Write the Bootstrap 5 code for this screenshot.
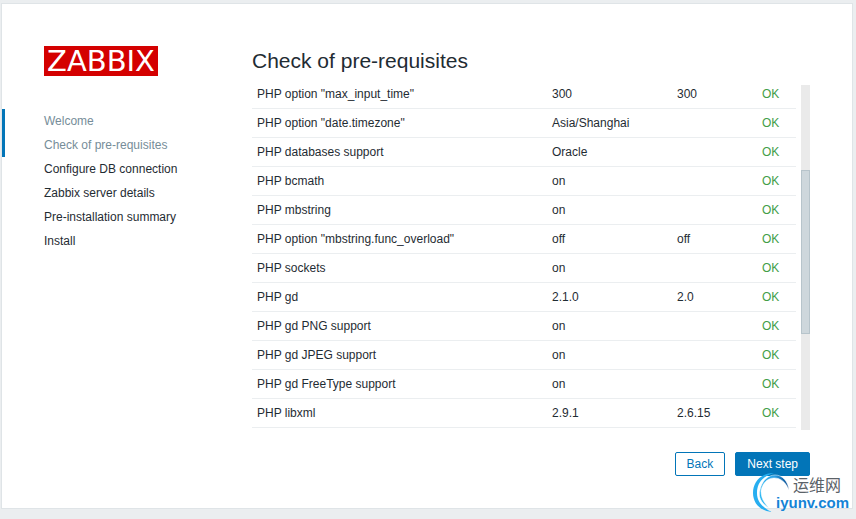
<!DOCTYPE html>
<html lang="en">
<head>
<meta charset="utf-8">
<meta name="viewport" content="width=device-width, initial-scale=1">
<title>Installation - Check of pre-requisites</title>
<link href="https://cdn.jsdelivr.net/npm/bootstrap@5.3.0/dist/css/bootstrap.min.css" rel="stylesheet">
<style>
body { background: #ebeef0; color: #1f2c33; font: 12px/16px "Liberation Sans", Arial, sans-serif; }
.setup-panel { margin: 3px 3px 10px 1px; border: 1px solid #dfe4e7; padding: 42px 42px 32px 0; }
.setup-side { width: 250px; }
.setup-logo { width: 114px; margin: 0 0 33px 42px; background: #d40000; color: #fff; font: 29px/30px "DejaVu Sans", sans-serif; }
.step { height: 24px; padding: 4px 0 4px 39px; border-left: 3px solid transparent; }
.step-done { border-left-color: #0275b8; color: #768d99; }
.setup-title { font-size: 21px; line-height: 24px; margin: 3px 0 12px; color: #1f2c33; font-weight: 400; }
.req-area { height: 345px; gap: 5px; }
.req-table { table-layout: fixed; border-collapse: separate; border-spacing: 0; }
.req-table td { height: 29px; padding: 6px 5px; line-height: 16px; border-bottom: 1px solid #ebeef0; white-space: nowrap; }
.req-table tr:first-child td { height: 24px; padding-top: 1px; }
.col-current { width: 125px; }
.col-required { width: 85px; }
.col-status { width: 39px; }
.status-ok { color: #429e47; }
.track { width: 9px; padding-top: 85px; background: #eaeaea; }
.thumb { height: 164px; background: #ced7dc; border: 1px solid #b7c4cb; }
.setup-actions { margin-top: 22px; gap: 10px; }
.btn-setup { --bs-btn-font-size: 12px; --bs-btn-line-height: 16px; --bs-btn-padding-x: 11px; --bs-btn-padding-y: 3px; --bs-btn-border-radius: 2px; --bs-btn-color: #0275b8; --bs-btn-border-color: #0275b8; --bs-btn-bg: #fff; }
.btn-next { --bs-btn-color: #fff; --bs-btn-bg: #0275b8; }
.site-mark { right: 0; bottom: -5px; width: 100px; height: 42px; }
</style>
</head>
<body>
<div class="setup-panel bg-white d-flex position-relative">
  <aside class="setup-side flex-shrink-0">
    <div class="setup-logo text-center text-nowrap">ZABBIX</div>
    <ul class="list-unstyled mb-0">
      <li class="step step-done">Welcome</li>
      <li class="step step-done">Check of pre-requisites</li>
      <li class="step">Configure DB connection</li>
      <li class="step">Zabbix server details</li>
      <li class="step">Pre-installation summary</li>
      <li class="step">Install</li>
    </ul>
  </aside>
  <main class="flex-grow-1">
    <h1 class="setup-title">Check of pre-requisites</h1>
    <div class="req-area d-flex">
      <div class="flex-grow-1">
        <table class="req-table w-100">
          <colgroup><col><col class="col-current"><col class="col-required"><col class="col-status"></colgroup>
          <tbody>
            <tr><td>PHP option "max_input_time"</td><td>300</td><td>300</td><td class="status-ok">OK</td></tr>
            <tr><td>PHP option "date.timezone"</td><td>Asia/Shanghai</td><td></td><td class="status-ok">OK</td></tr>
            <tr><td>PHP databases support</td><td>Oracle</td><td></td><td class="status-ok">OK</td></tr>
            <tr><td>PHP bcmath</td><td>on</td><td></td><td class="status-ok">OK</td></tr>
            <tr><td>PHP mbstring</td><td>on</td><td></td><td class="status-ok">OK</td></tr>
            <tr><td>PHP option "mbstring.func_overload"</td><td>off</td><td>off</td><td class="status-ok">OK</td></tr>
            <tr><td>PHP sockets</td><td>on</td><td></td><td class="status-ok">OK</td></tr>
            <tr><td>PHP gd</td><td>2.1.0</td><td>2.0</td><td class="status-ok">OK</td></tr>
            <tr><td>PHP gd PNG support</td><td>on</td><td></td><td class="status-ok">OK</td></tr>
            <tr><td>PHP gd JPEG support</td><td>on</td><td></td><td class="status-ok">OK</td></tr>
            <tr><td>PHP gd FreeType support</td><td>on</td><td></td><td class="status-ok">OK</td></tr>
            <tr><td>PHP libxml</td><td>2.9.1</td><td>2.6.15</td><td class="status-ok">OK</td></tr>
          </tbody>
        </table>
      </div>
      <div class="track flex-shrink-0"><div class="thumb"></div></div>
    </div>
    <div class="setup-actions d-flex justify-content-end">
      <button type="button" class="btn btn-setup">Back</button>
      <button type="button" class="btn btn-setup btn-next">Next step</button>
    </div>
  </main>
  <svg class="site-mark position-absolute overflow-visible" viewBox="0 0 100 42" aria-label="iyunv.com">
    <defs><linearGradient id="swoosh" x1="0" y1=".6" x2="1" y2=".4"><stop offset="0" stop-color="#25b6f3"/><stop offset=".6" stop-color="#2aa0e6"/><stop offset="1" stop-color="#0a4c90"/></linearGradient></defs>
    <path fill="#27aef0" d="M22 2C9 2 1 11 1 22C1 32 8 40 20 41C11 37 5 31 5 22C5 12 11 5 22 2Z"/>
    <path fill="url(#swoosh)" stroke="#fff" stroke-width=".5" d="M17 37C9 32 6 26 8 19C10 9 17 4 23 4C31 4 36 11 37 19C33 10 28 7 22 7C15 7 10 13 9 20C9 28 13 33 17 37Z"/>
    <text x="41" y="20" font-family="Noto Sans CJK SC, sans-serif" font-size="16" fill="#5b6268">运维网</text>
    <text x="24" y="37" font-family="Liberation Sans, sans-serif" font-weight="700" font-size="15" fill="#1484d6">iyunv.com</text>
  </svg>
</div>
<script src="https://cdn.jsdelivr.net/npm/bootstrap@5.3.0/dist/js/bootstrap.bundle.min.js"></script>
</body>
</html>
